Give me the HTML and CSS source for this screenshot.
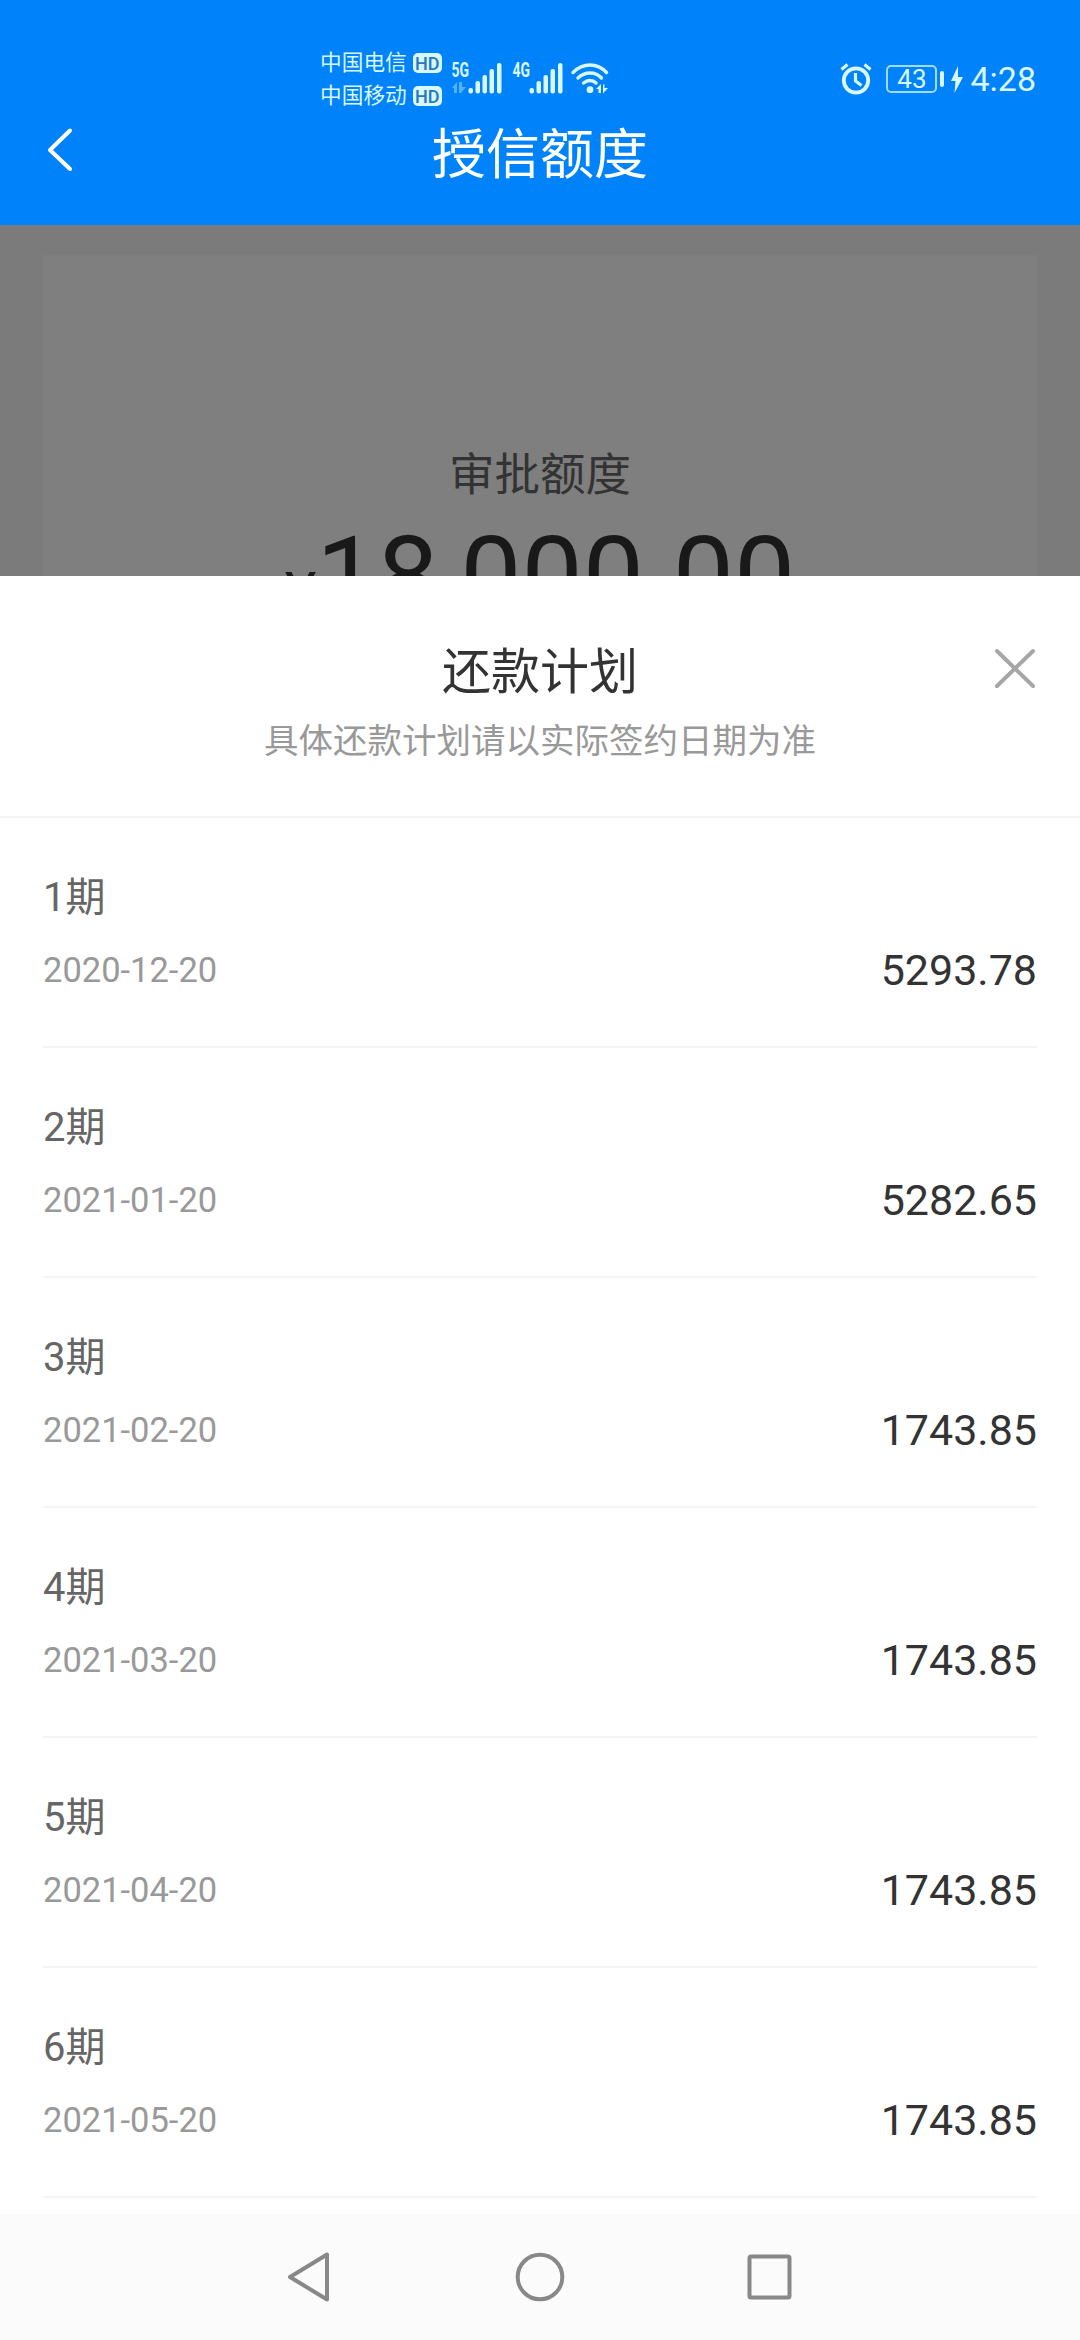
FILE: index.html
```html
<!DOCTYPE html>
<html lang="zh-CN">
<head>
    <meta charset="UTF-8">
    <meta name="viewport" content="width=device-width, initial-scale=1.0">
    <title>授信额度</title>
    <link rel="stylesheet" href="styles.css">
</head>
<body>
    <header class="header">
        <div class="status-bar">
            <div class="carriers">
                <div class="carrier">中国电信<span class="hd">HD</span></div>
                <div class="carrier">中国移动<span class="hd">HD</span></div>
            </div>
            <svg class="signals" width="160" height="40" viewBox="450 58 160 40">
                <g fill="#d8f8ff">
                    <text class="net" x="451.5" y="77" textLength="17.5" lengthAdjust="spacingAndGlyphs">5G</text>
                    <path opacity=".4" d="M452 88l5-6v11h-3v-5zM459 82h3v5h4l-5 6h-2z"/>
                    <rect x="468.5" y="88" width="4.5" height="5.5" rx="2"/>
                    <rect x="475.5" y="81" width="4.5" height="12.5" rx="2"/>
                    <rect x="482.5" y="75" width="4.5" height="18.5" rx="2"/>
                    <rect x="489.5" y="69" width="4.5" height="24.5" rx="2"/>
                    <rect x="497" y="63" width="4.5" height="30.5" rx="2"/>

                    <text class="net" x="512.5" y="77" textLength="17.5" lengthAdjust="spacingAndGlyphs">4G</text>
                    <rect x="529.5" y="88" width="4.5" height="5.5" rx="2"/>
                    <rect x="536.5" y="81" width="4.5" height="12.5" rx="2"/>
                    <rect x="543.5" y="75" width="4.5" height="18.5" rx="2"/>
                    <rect x="550.5" y="69" width="4.5" height="24.5" rx="2"/>
                    <rect x="558" y="63" width="4.5" height="30.5" rx="2"/>

                    <circle cx="590" cy="89.7" r="3.4"/>
                    <path d="M596 89l5-5v9h-2.5v-4zM603 84.500h1.500v3.500h3.500l-5 5.500z"/>
                </g>
                <g fill="none" stroke="#d8f8ff" stroke-width="3.4" stroke-linecap="round">
                    <path d="M573 72.500Q580.500 65 590 65Q599.500 65 606.500 72.500"/>
                    <path d="M578 78Q583 73 590 73Q597 73 601.500 78"/>
                    <path d="M583.500 83Q586.500 80.500 590 80.500Q593.500 80.500 596 83"/>
                </g>
            </svg>
            <div class="status-right">
                <svg width="32" height="32" viewBox="840 62 32 32" fill="none" stroke="#d8f8ff">
                    <circle cx="856" cy="79.500" r="12.200" stroke-width="3.800"/>
                    <path stroke-width="3.200" d="M855.500 72v8l6 4.500M841.500 68.500l6-5M864.500 63.500l6 5"/>
                </svg>
                <div class="battery">43</div>
                <svg class="bolt" width="12" height="27" viewBox="0 0 12 27">
                    <path d="M7 0L0 15h4.500L3.500 27L12 11H7z" fill="#d8f8ff"/>
                </svg>
                <span class="clock">4:28</span>
            </div>
        </div>
        <div class="title-bar">
            <svg class="back" width="30" height="46" viewBox="0 0 30 46">
                <path d="M25 4.500L5 24L25 43" fill="none" stroke="#fff" stroke-width="4" stroke-linecap="round" stroke-linejoin="round"/>
            </svg>
            <h1>授信额度</h1>
        </div>
    </header>

    <section class="credit">
        <div class="credit-card">
            <p class="credit-label">审批额度</p>
            <p class="credit-amount"><span class="yen">¥</span>18,000.00</p>
        </div>
        <div class="mask"></div>
    </section>

    <main class="sheet">
        <div class="sheet-header">
            <h2>还款计划</h2>
            <p>具体还款计划请以实际签约日期为准</p>
            <svg class="close" width="42" height="42" viewBox="0 0 42 42">
                <path d="M3 3L39 38M39 3L3 38" stroke="#a6a6a6" stroke-width="4" stroke-linecap="round"/>
            </svg>
        </div>
        <ul class="plan">
            <li>
                <div class="term">1期</div>
                <div class="detail"><span class="date">2020-12-20</span><span class="money">5293.78</span></div>
            </li>
            <li>
                <div class="term">2期</div>
                <div class="detail"><span class="date">2021-01-20</span><span class="money">5282.65</span></div>
            </li>
            <li>
                <div class="term">3期</div>
                <div class="detail"><span class="date">2021-02-20</span><span class="money">1743.85</span></div>
            </li>
            <li>
                <div class="term">4期</div>
                <div class="detail"><span class="date">2021-03-20</span><span class="money">1743.85</span></div>
            </li>
            <li>
                <div class="term">5期</div>
                <div class="detail"><span class="date">2021-04-20</span><span class="money">1743.85</span></div>
            </li>
            <li>
                <div class="term">6期</div>
                <div class="detail"><span class="date">2021-05-20</span><span class="money">1743.85</span></div>
            </li>
        </ul>
    </main>

    <nav class="nav-bar">
        <svg width="52" height="52" viewBox="0 0 52 52"><path d="M42 3.500V48.500L5 26Z"/></svg>
        <svg width="52" height="52" viewBox="0 0 52 52"><circle cx="26" cy="26" r="22.300"/></svg>
        <svg width="52" height="52" viewBox="0 0 52 52"><rect x="6.500" y="5.500" width="40" height="41" rx="1.500"/></svg>
    </nav>
</body>
</html>
```
FILE: styles.css
```css
* {
    margin: 0;
    padding: 0;
    box-sizing: border-box;
}

body {
    width: 1080px;
    height: 2340px;
    display: flex;
    flex-direction: column;
    background: #fff;
    font-family: Roboto, "Noto Sans CJK SC", sans-serif;
    overflow: hidden;
}

h1, h2 {
    font-weight: normal;
}

.header {
    height: 225px;
    background: #0082fa;
    color: #fff;
}

.status-bar {
    height: 107px;
    padding: 46px 44px 0 320px;
    display: flex;
    align-items: flex-start;
    color: #d8f8ff;
}

.carriers {
    width: 130px;
}

.carrier {
    display: flex;
    align-items: center;
    height: 33px;
    font-size: 21.7px;
    line-height: 33px;
}

.hd {
    width: 29px;
    height: 20px;
    margin-left: 6px;
    border-radius: 5px;
    background: #d8f8ff;
    color: #2377c4;
    font-size: 18px;
    font-weight: 500;
    line-height: 21px;
    text-align: center;
}

.signals {
    margin-top: 12px;
}

.net {
    font-size: 20px;
    font-weight: bold;
}

.status-right {
    display: flex;
    align-items: center;
    height: 32px;
    margin-top: 17px;
    margin-left: auto;
}

.battery {
    position: relative;
    width: 51px;
    height: 28px;
    margin-left: 14px;
    border: 2px solid #a0dcff;
    border-radius: 5px;
    font-size: 26px;
    line-height: 25px;
    text-align: center;
}

.battery::after {
    content: "";
    position: absolute;
    right: -9px;
    top: 4px;
    width: 4px;
    height: 16px;
    border-radius: 2px;
    background: #d8f8ff;
}

.bolt {
    margin-left: 14px;
}

.clock {
    margin-left: 7px;
    font-size: 34px;
    line-height: 34px;
}

.title-bar {
    display: grid;
    grid-template-columns: 90px 1fr 90px;
    height: 84px;
    align-items: center;
    padding: 0 45px;
}

.title-bar h1 {
    padding-top: 13px;
    font-size: 54px;
    line-height: 71px;
    text-align: center;
}

.credit {
    position: relative;
    height: 351px;
    padding: 30px 43px 0;
    background: #f6f6f6;
    overflow: hidden;
}

.credit-card {
    height: 600px;
    padding-top: 191px;
    background: #fff;
    text-align: center;
}

.credit-label {
    color: #666;
    font-size: 45.5px;
    line-height: 60px;
}

.credit-amount {
    color: #333;
    font-size: 109px;
    line-height: 128px;
    margin-top: 7px;
}

.yen {
    font-size: 60px;
}

.mask {
    position: absolute;
    inset: 0;
    background: rgba(0, 0, 0, 0.5);
}

.sheet {
    height: 1638px;
    background: #fff;
    overflow: hidden;
}

.sheet-header {
    position: relative;
    height: 242px;
    padding-top: 62px;
    border-bottom: 2px solid #f4f4f4;
    text-align: center;
}

.sheet-header h2 {
    color: #333;
    font-size: 49px;
    line-height: 70px;
}

.sheet-header p {
    margin-top: 8px;
    color: #999;
    font-size: 34.5px;
    line-height: 50px;
}

.close {
    position: absolute;
    right: 44px;
    top: 72px;
}

.plan {
    list-style: none;
    padding: 0 43px;
}

.plan li {
    height: 230px;
    padding-top: 51px;
    border-bottom: 2px solid #f4f4f4;
}

.term {
    color: #666;
    font-size: 40px;
    line-height: 58px;
}

.detail {
    display: flex;
    justify-content: space-between;
    align-items: center;
    height: 52px;
    margin-top: 17px;
}

.date {
    color: #999;
    font-size: 34.5px;
}

.money {
    color: #333;
    font-size: 43px;
}

.nav-bar {
    display: flex;
    height: 126px;
    padding: 37px 285px 0;
    justify-content: space-between;
    background: #fbfbfb;
}

.nav-bar svg {
    fill: none;
    stroke: #888;
    stroke-width: 4;
    stroke-linejoin: round;
}
```
